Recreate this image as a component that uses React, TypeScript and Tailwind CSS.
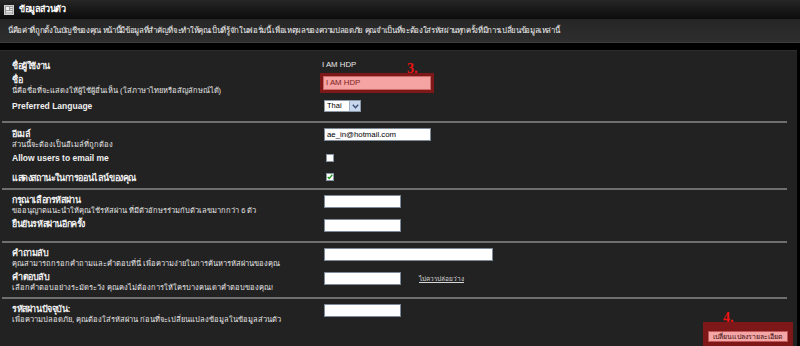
import React from "react";

const font = { fontFamily: '"Liberation Sans", "Noto Sans", Tahoma, sans-serif' };

function Divider() {
  return <div className="h-[2px] bg-[#6f6f6f] ml-[2px] mr-[10px]" />;
}

function Label({ title, sub, en }: { title: string; sub?: string; en?: boolean }) {
  return (
    <div className="w-[324px] shrink-0 pl-[12px] whitespace-nowrap">
      <div
        className={
          en
            ? "text-[8.5px] leading-[12px] font-bold text-[#f0f0f0]"
            : "relative top-[1px] text-[9px] leading-[12px] font-bold tracking-[-0.4px] text-[#f0f0f0]"
        }
      >
        {title}
      </div>
      {sub && <div className="text-[7.5px] leading-[9px] text-[#e6e6e6] mt-[1px]">{sub}</div>}
    </div>
  );
}

function TextBox({ w, value }: { w: string; value?: string }) {
  return (
    <div
      className={`${w} h-[13px] bg-white border border-[#7d8a99] text-[7.8px] leading-[11px] text-black pl-[2px] overflow-hidden whitespace-nowrap`}
    >
      {value}
    </div>
  );
}

function Check({ on }: { on?: boolean }) {
  return (
    <div className="w-[8px] h-[8px] ml-[2px] bg-white border border-[#8a96a6] flex items-center justify-center">
      {on && (
        <svg width="8" height="8" viewBox="0 0 8 8">
          <path d="M1 4 L3 6 L7 1" stroke="#1f9a1f" strokeWidth="1.8" fill="none" />
        </svg>
      )}
    </div>
  );
}

export default function App() {
  return (
    <div className="w-[800px] h-[346px] overflow-hidden bg-[#000]" style={font}>
      {/* Title bar */}
      <div className="h-[19px] bg-gradient-to-b from-[#262626] to-[#0c0c0c] flex items-center pl-[4px] gap-[5px]">
        <svg width="10" height="10" viewBox="0 0 10 10">
          <rect x="0.5" y="0.5" width="9" height="9" fill="#9a9a9a" stroke="#d0d0d0" />
          <rect x="2" y="2" width="3" height="3" fill="#f2f2f2" />
          <path d="M6 2.5 H8.5 M6 4.5 H8.5 M2 6.5 H8.5 M2 8 H8" stroke="#ffffff" strokeWidth="0.8" />
        </svg>
        <span className="text-[9px] font-bold tracking-[-0.4px] text-white">ข้อมูลส่วนตัว</span>
      </div>
      {/* Description */}
      <div className="h-[24px] bg-gradient-to-b from-[#262626] to-[#2e2e2e] border-b border-[#3c3c3c] flex items-center pl-[8px]">
        <span className="text-[7.8px] tracking-[-0.35px] text-[#f2f2f2] whitespace-nowrap">
          นี่คือค่าที่ถูกตั้งในบัญชีของคุณ หน้านี้มีข้อมูลที่สำคัญที่จะทำให้คุณเป็นที่รู้จักในฟอรั่มนี้ เพื่อเหตุผลของความปลอดภัย คุณจำเป็นที่จะต้องใส่รหัสผ่านทุกครั้งที่มีการเปลี่ยนข้อมูลเหล่านี้
        </span>
      </div>
      <div className="h-[7px] bg-black" />

      {/* Main panel */}
      <div className="h-[296px] bg-[#222222] border-t border-[#2c2c2c] mr-[3px]">
        {/* Section 1 */}
        <div className="pt-[7px] h-[70px]">
          <div className="flex items-center h-[14px]">
            <Label title="ชื่อผู้ใช้งาน" />
            <span className="ml-[-2px] text-[7.8px] text-[#e8e8e8]">I AM HDP</span>
          </div>
          <div className="flex items-start h-[22px] mt-[1px]">
            <Label title="ชื่อ" sub="นี่คือชื่อที่จะแสดงให้ผู้ใช้ผู้อื่นเห็น (ใส่ภาษาไทยหรือสัญลักษณ์ได้)" />
            <div className="relative">
              <div className="ml-[-4px] p-[3px] bg-[#7e1717]">
                <div className="w-[108px] h-[14px] bg-[#f6a3a3] border border-[#c86a6a] text-[7.8px] leading-[12px] text-[#7a1e1e] pl-[2px]">
                  I AM HDP
                </div>
              </div>
              <span
                className="absolute left-[83px] top-[-11px] text-[14px] font-bold text-[#ee1111] leading-none"
                style={{ fontFamily: '"Liberation Serif", serif' }}
              >
                3.
              </span>
            </div>
          </div>
          <div className="flex items-center h-[14px] mt-[4px]">
            <Label title="Preferred Language" en />
            <div className="w-[37px] h-[12px] bg-white border border-[#8b98a8] flex items-center text-[7.5px] text-black">
              <span className="pl-[2px] flex-1">Thai</span>
              <div className="w-[11px] h-[10px] bg-[#c8d7ec] border-l border-[#9fb3cf] flex items-center justify-center">
                <svg width="7" height="5" viewBox="0 0 7 5">
                  <path d="M0.8 0.8 L3.5 3.8 L6.2 0.8" stroke="#3a4f7a" strokeWidth="1.4" fill="none" />
                </svg>
              </div>
            </div>
          </div>
        </div>
        <Divider />

        {/* Section 2 */}
        <div className="pt-[4px] h-[65px]">
          <div className="flex items-start h-[20px]">
            <Label title="อีเมล์" sub="ส่วนนี้จะต้องเป็นอีเมล์ที่ถูกต้อง" />
            <div className="mt-[1px]">
              <TextBox w="w-[107px]" value="ae_in@hotmail.com" />
            </div>
          </div>
          <div className="flex items-center h-[14px] mt-[4px]">
            <Label title="Allow users to email me" en />
            <Check />
          </div>
          <div className="flex items-center h-[14px] mt-[5px]">
            <Label title="แสดงสถานะในการออนไลน์ของคุณ" />
            <Check on />
          </div>
        </div>
        <Divider />

        {/* Section 3 */}
        <div className="pt-[3px] h-[51px]">
          <div className="flex items-start h-[20px]">
            <Label title="กรุณาเลือกรหัสผ่าน" sub="ขออนุญาตแนะนำให้คุณใช้รหัสผ่าน ที่มีตัวอักษรร่วมกับตัวเลขมากกว่า 6 ตัว" />
            <div className="mt-[2px]">
              <TextBox w="w-[77px]" />
            </div>
          </div>
          <div className="flex items-center h-[14px] mt-[3px]">
            <Label title="ยืนยันรหัสผ่านอีกครั้ง" />
            <div className="mt-[4px]">
              <TextBox w="w-[77px]" />
            </div>
          </div>
        </div>
        <Divider />

        {/* Section 4 */}
        <div className="pt-[3px] h-[54px]">
          <div className="flex items-start h-[20px]">
            <Label title="คำถามลับ" sub="คุณสามารถกรอกคำถามและคำตอบที่นี่ เพื่อความง่ายในการค้นหารหัสผ่านของคุณ" />
            <div className="mt-[2px]">
              <TextBox w="w-[169px]" />
            </div>
          </div>
          <div className="flex items-start h-[20px] mt-[4px]">
            <Label title="คำตอบลับ" sub="เลือกคำตอบอย่างระมัดระวัง คุณคงไม่ต้องการให้ใครบางคนเดาคำตอบของคุณ!" />
            <div className="mt-[2px] flex items-center">
              <TextBox w="w-[77px]" />
              <span className="ml-[18px] text-[6.5px] text-[#d8d8d8] underline">ไม่ควรปล่อยว่าง</span>
            </div>
          </div>
        </div>
        <Divider />

        {/* Section 5 */}
        <div className="pt-[3px]">
          <div className="flex items-start h-[20px]">
            <Label title="รหัสผ่านปัจจุบัน:" sub="เพื่อความปลอดภัย, คุณต้องใส่รหัสผ่าน ก่อนที่จะเปลี่ยนแปลงข้อมูลในข้อมูลส่วนตัว" />
            <div className="mt-[2px]">
              <TextBox w="w-[77px]" />
            </div>
          </div>
          <div className="flex justify-end pr-[4px]">
            <div className="relative">
              <span
                className="absolute left-[20px] top-[-11px] text-[14px] font-bold text-[#ee1111] leading-none"
                style={{ fontFamily: '"Liberation Serif", serif' }}
              >
                4.
              </span>
              <div className="w-[90px] h-[25px] bg-[#7e1717] flex items-center justify-center pt-[3px]">
                <div className="w-[80px] h-[11px] bg-[#f5a6a6] border border-[#c05656] text-[7px] leading-[9px] text-[#3a0c0c] text-center whitespace-nowrap">
                  เปลี่ยนแปลงรายละเอียด
                </div>
              </div>
            </div>
          </div>
        </div>
      </div>
    </div>
  );
}
